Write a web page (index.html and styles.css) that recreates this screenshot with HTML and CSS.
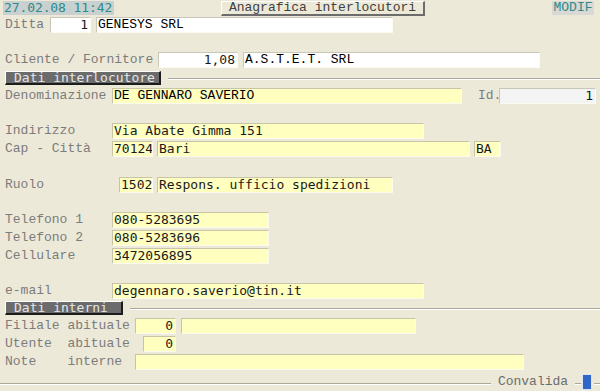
FILE: index.html
```html
<!DOCTYPE html>
<html lang="it">
<head>
  <meta charset="UTF-8">
  <title>Anagrafica interlocutori</title>
  <link rel="stylesheet" href="styles.css">
</head>
<body>
<div class="screen">
  <div class="topbar">
    <span class="clock">27.02.08 11:42</span>
    <span class="title-btn">Anagrafica interlocutori</span>
    <span class="mode">MODIF</span>
  </div>

  <div class="row gap-1">
    <span class="label w-ditta">Ditta</span>
    <span class="field white num w41">1</span>
    <span class="field white courier w297 ml5">GENESYS SRL</span>
  </div>

  <div class="row gap-19">
    <span class="label w-cliente">Cliente / Fornitore</span>
    <span class="field white num w80">1,08</span>
    <span class="field white courier w297 ml5">A.S.T.E.T. SRL</span>
  </div>

  <div class="section gap-3">
    <span class="section-title w155">Dati interlocutore</span>
    <span class="section-line"></span>
  </div>

  <div class="row gap-3">
    <span class="label w-std">Denominazione</span>
    <span class="field courier w350">DE GENNARO SAVERIO</span>
    <span class="label id-label">Id.</span>
    <span class="field grey num w97">1</span>
  </div>

  <div class="row gap-19">
    <span class="label w-std">Indirizzo</span>
    <span class="field w312">Via Abate Gimma 151</span>
  </div>
  <div class="row gap-2">
    <span class="label w-std">Cap - Città</span>
    <span class="field w41">70124</span>
    <span class="field w313 ml4">Bari</span>
    <span class="field w27 ml4">BA</span>
  </div>

  <div class="row gap-20">
    <span class="label w-ruolo">Ruolo</span>
    <span class="field w34">1502</span>
    <span class="field w236 ml4">Respons. ufficio spedizioni</span>
  </div>

  <div class="row gap-19">
    <span class="label w-std">Telefono 1</span>
    <span class="field w157">080-5283695</span>
  </div>
  <div class="row gap-2">
    <span class="label w-std">Telefono 2</span>
    <span class="field w157">080-5283696</span>
  </div>
  <div class="row gap-2">
    <span class="label w-std">Cellulare</span>
    <span class="field w157">3472056895</span>
  </div>

  <div class="row gap-19">
    <span class="label w-std">e-mail</span>
    <span class="field w312">degennaro.saverio@tin.it</span>
  </div>

  <div class="section gap-2">
    <span class="section-title w117">Dati interni</span>
    <span class="section-line"></span>
  </div>

  <div class="row gap-3">
    <span class="label w-filiale">Filiale abituale</span>
    <span class="field num w41">0</span>
    <span class="field w235 ml5"></span>
  </div>
  <div class="row gap-2">
    <span class="label w-utente">Utente  abituale</span>
    <span class="field num w33">0</span>
  </div>
  <div class="row gap-2">
    <span class="label w-filiale">Note    interne</span>
    <span class="field w389"></span>
  </div>

  <div class="footer">
    <span class="footer-line"></span>
    <span class="confirm">Convalida</span>
    <span class="footer-line short"></span>
    <span class="confirm-box"></span>
    <span class="footer-line tail"></span>
  </div>
</div>
</body>
</html>
```

FILE: styles.css
```css
* {
  box-sizing: border-box;
}

body {
  margin: 0;
  background: #ece9d8;
  font-family: "Liberation Mono", "Courier New", monospace;
  font-size: 13px;
}

.screen {
  width: 600px;
  height: 391px;
  overflow: hidden;
  display: flex;
  flex-direction: column;
}

/* top bar */
.topbar {
  display: flex;
  align-items: flex-start;
  height: 16px;
}

.clock {
  margin: 1px 0 0 3px;
  width: 111px;
  height: 14px;
  line-height: 14px;
  padding-left: 1px;
  background: #c9d0d0;
  color: #2e8b8b;
  font-family: "DejaVu Sans Mono", monospace;
  font-size: 13px;
  letter-spacing: -0.1px;
}

.title-btn {
  margin: 1px 0 0 107px;
  width: 204px;
  height: 15px;
  line-height: 12px;
  text-align: center;
  color: #404040;
  background: #ece9d8;
  border-top: 1px solid #fff;
  border-left: 1px solid #fff;
  border-right: 2px solid #6c6c6c;
  border-bottom: 2px solid #6c6c6c;
}

.mode {
  margin: 1px 6px 0 auto;
  width: 42px;
  height: 14px;
  line-height: 14px;
  text-align: center;
  background: #d8d8d4;
  color: #2e8b8b;
}

/* rows */
.row {
  display: flex;
  align-items: stretch;
  height: 16px;
  padding-left: 5px;
}

.gap-1 { margin-top: 1px; }
.gap-2 { margin-top: 2px; }
.gap-3 { margin-top: 3px; }
.gap-19 { margin-top: 19px; }
.gap-20 { margin-top: 20px; }

.label {
  color: #7c7c7c;
  line-height: 16px;
  white-space: pre;
  flex: none;
}

.w-ditta { width: 45px; }
.w-cliente { width: 153px; }
.w-std { width: 107px; }
.w-ruolo { width: 114px; }
.w-filiale { width: 130px; }
.w-utente { width: 138px; }

.id-label {
  margin-left: 16px;
  width: 21px;
}

.field {
  flex: none;
  height: 16px;
  line-height: 14px;
  padding: 0 2px 0 1px;
  background: #ffffc0;
  color: #1a1a1a;
  border-top: 1px solid #c8c4a8;
  border-left: 1px solid #c8c4a8;
  border-right: 1px solid #fbfbf2;
  border-bottom: 1px solid #fbfbf2;
  font-family: "DejaVu Sans Mono", monospace;
  font-size: 13px;
  white-space: pre;
  overflow: hidden;
}

.field.white {
  background: #fff;
  border-top-color: #c9c7ba;
  border-left-color: #c9c7ba;
}

.field.grey {
  background: #f4f4f4;
  border-top-color: #c9c7ba;
  border-left-color: #c9c7ba;
}

.field.courier {
  font-family: "Liberation Mono", "Courier New", monospace;
  color: #000;
}

.field.num {
  text-align: right;
}

.ml4 { margin-left: 4px; }
.ml5 { margin-left: 5px; }

.w27 { width: 27px; }
.w33 { width: 33px; }
.w34 { width: 34px; }
.w41 { width: 41px; }
.w80 { width: 80px; }
.w97 { width: 97px; }
.w157 { width: 157px; }
.w235 { width: 235px; }
.w236 { width: 236px; }
.w297 { width: 297px; }
.w312 { width: 312px; }
.w313 { width: 313px; }
.w350 { width: 350px; }
.w389 { width: 389px; }

/* section headers */
.section {
  display: flex;
  align-items: center;
  height: 14px;
  padding-left: 5px;
}

.section-title {
  flex: none;
  height: 14px;
  line-height: 11px;
  padding-left: 8px;
  background: #6b6b6b;
  color: #e6e6e6;
  font-family: "DejaVu Sans Mono", monospace;
  font-size: 13px;
  border-top: 1px solid #fff;
  border-left: 1px solid #fff;
  border-right: 2px solid #1c1c1c;
  border-bottom: 2px solid #1c1c1c;
  white-space: pre;
  overflow: hidden;
}

.w155 { width: 156px; }
.w117 { width: 118px; }

.section-line {
  flex: 1;
  margin-left: 7px;
  margin-top: 2px;
  border-top: 1px solid #aca899;
  border-bottom: 1px solid #fff;
}

/* footer */
.footer {
  display: flex;
  align-items: center;
  height: 18px;
  margin-top: 3px;
}

.footer-line {
  width: 493px;
  border-top: 1px solid #aca899;
  border-bottom: 1px solid #fff;
  margin-top: 4px;
}

.footer-line.short {
  width: 6px;
  margin-left: 7px;
}

.footer-line.tail {
  width: 6px;
  margin-left: 2px;
}

.confirm {
  margin-left: 7px;
  color: #6c6c6c;
  line-height: 16px;
}

.confirm-box {
  width: 10px;
  height: 16px;
  margin-left: 1px;
  background: #2f66c8;
  border: 1px solid #dce4f4;
}
```
